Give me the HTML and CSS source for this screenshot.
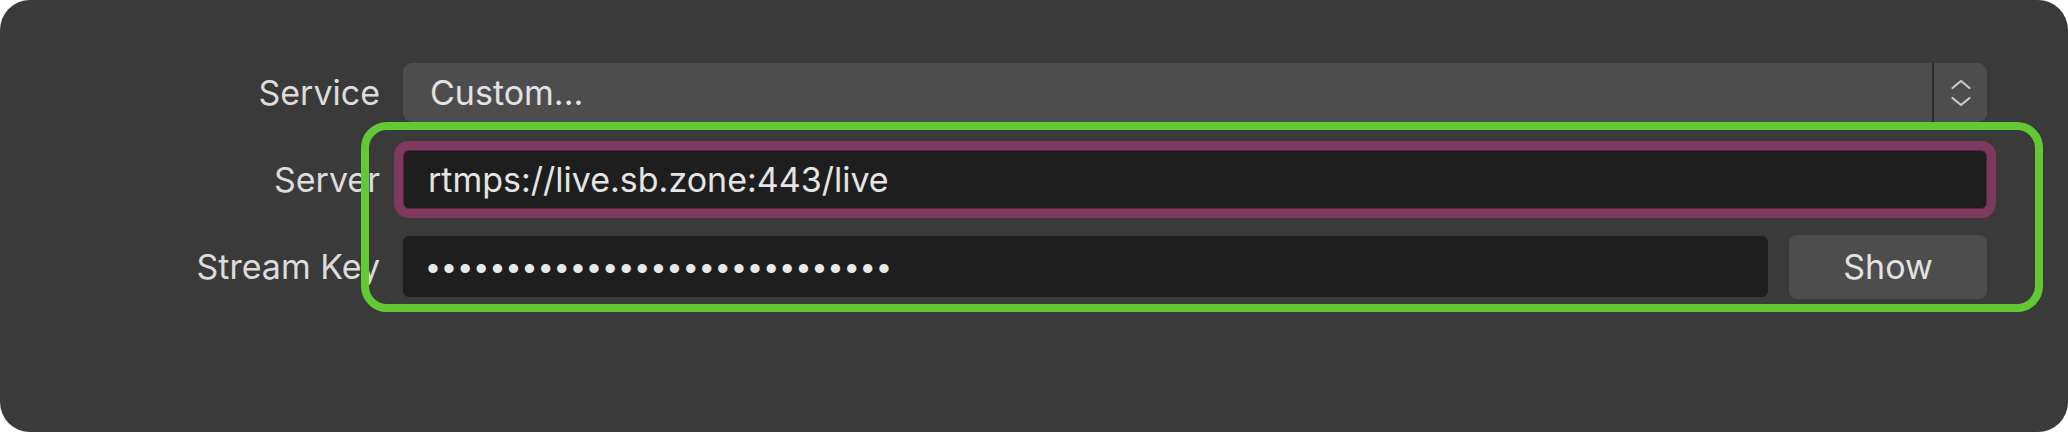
FILE: index.html
```html
<!DOCTYPE html>
<html lang="en">
<head>
    <meta charset="UTF-8">
    <meta name="viewport" content="width=device-width, initial-scale=1.0">
    <title>Stream settings</title>
    <link rel="stylesheet" href="styles.css">
</head>
<body>
    <div class="panel">
        <div class="form">
            <label class="label">Service</label>
            <div class="select">
                <span class="select-value">Custom...</span>
                <span class="stepper">
                    <svg width="22" height="34" viewBox="0 0 22 34">
                        <path d="M2.5 12 L11 5 L19.5 12" fill="none" stroke="#c9c9c9" stroke-width="2.2" stroke-linecap="round" stroke-linejoin="round"/>
                        <path d="M2.5 22 L11 29 L19.5 22" fill="none" stroke="#c9c9c9" stroke-width="2.2" stroke-linecap="round" stroke-linejoin="round"/>
                    </svg>
                </span>
            </div>

            <label class="label">Server</label>
            <div class="field field-focus">rtmps://live.sb.zone:443/live</div>

            <label class="label">Stream Key</label>
            <div class="key-row">
                <div class="field field-key"><span class="dots">•••••••••••••••••••••••••••••</span></div>
                <button class="button">Show</button>
            </div>
        </div>

        <!-- highlight drawn over the server and key rows -->
        <div class="highlight"></div>
    </div>
</body>
</html>
```

FILE: styles.css
```css
body {
    margin: 0;
    padding: 0;
    background-color: white;
    font-family: Inter, 'Liberation Sans', sans-serif;
}
.panel {
    position: relative;
    width: 2068px;
    height: 432px;
    box-sizing: border-box;
    padding-top: 63px;
    background-color: #3a3a3a;
    border-radius: 30px;
}
.form {
    display: grid;
    grid-template-columns: 380px 1584px;
    grid-auto-rows: 59px;
    column-gap: 23px;
    row-gap: 28px;
    align-items: center;
}
.label {
    text-align: right;
    font-size: 34px;
    color: #dcdcdc;
}
.select {
    display: flex;
    align-items: stretch;
    height: 59px;
    background-color: #4d4d4d;
    border-radius: 9px;
}
.select-value {
    flex: 1;
    display: flex;
    align-items: center;
    padding-left: 27px;
    font-size: 34px;
    color: #e2e2e2;
}
.stepper {
    width: 53px;
    display: flex;
    align-items: center;
    justify-content: center;
    border-left: 2px solid #2c2c2c;
}
.field {
    height: 59px;
    box-sizing: border-box;
    display: flex;
    align-items: center;
    padding-left: 25px;
    background-color: #1e1e1e;
    border-radius: 6px;
    font-size: 34px;
    color: #e4e4e4;
}
.field-focus {
    border: 1px solid #5c2643;
    padding-left: 24px;
    box-shadow: 0 0 0 9px #7d3a5e;
}
.key-row {
    display: flex;
    align-items: center;
    gap: 21px;
}
.field-key {
    width: 1365px;
    height: 61px;
    padding-left: 24px;
}
.dots {
    font-family: 'Liberation Sans', sans-serif;
    font-size: 34px;
    letter-spacing: 4.2px;
    color: #e8e8e8;
    padding-top: 4px;
}
.button {
    width: 198px;
    height: 64px;
    border: none;
    border-radius: 8px;
    background-color: #4d4d4d;
    color: #e2e2e2;
    font-family: Inter, 'Liberation Sans', sans-serif;
    font-size: 34px;
}
.highlight {
    position: absolute;
    left: 361px;
    top: 122px;
    width: 1682px;
    height: 190px;
    box-sizing: border-box;
    border: 8px solid #62c934;
    border-radius: 26px;
}
```
